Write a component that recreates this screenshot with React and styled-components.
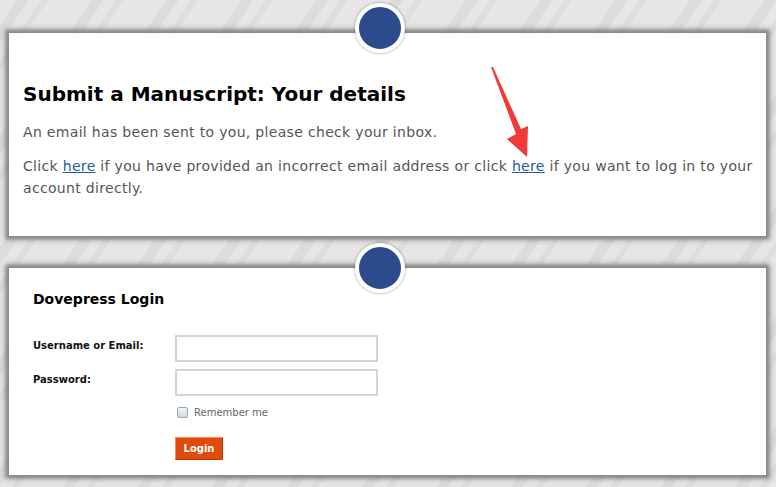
import React, { useState } from 'react';
import styled, { createGlobalStyle } from 'styled-components';

const GlobalStyle = createGlobalStyle`
  html, body {
    margin: 0;
    padding: 0;
  }
  body {
    font-family: "DejaVu Sans", Verdana, sans-serif;
    background-color: #e6e6e6;
    background-image: repeating-linear-gradient(
      124deg,
      #e6e6e6 0px,
      #e6e6e6 14px,
      #dcdcdc 14px,
      #dcdcdc 24px,
      #e6e6e6 24px,
      #e6e6e6 34px,
      #dedede 34px,
      #dedede 40px,
      #e6e6e6 40px,
      #e6e6e6 62px
    );
    min-height: 487px;
    overflow: hidden;
  }
`;

const Page = styled.div`
  display: flex;
  flex-direction: column;
  gap: 32px;
  padding: 33px 10px 12px 9px;
`;

const Card = styled.section`
  position: relative;
  background: #fff;
  height: ${(p) => p.h}px;
  box-sizing: border-box;
  padding: ${(p) => p.pad};
  box-shadow: 0 0 3px 3px #8a8a8a, 0 0 6px 4px rgba(0, 0, 0, 0.25);
`;

const Dot = styled.div`
  position: absolute;
  left: 346px;
  top: ${(p) => p.top}px;
  width: 42px;
  height: 42px;
  border-radius: 50%;
  background: #2c4b8b;
  border: 4px solid #fff;
  box-shadow: 0 0 2px 1px rgba(0, 0, 0, 0.2);
`;

const Title = styled.h1`
  margin: 0 0 14px;
  font-size: 20px;
  font-weight: bold;
  color: #000;
  line-height: 26px;
`;

const Text = styled.p`
  margin: 0 0 12px;
  font-size: 14px;
  letter-spacing: 0.32px;
  line-height: 22px;
  color: #555;
`;

const Link = styled.a`
  color: #1a5ba6;
  text-decoration: underline;
`;

const Arrow = styled.svg`
  position: absolute;
  left: 470px;
  top: 30px;
  overflow: visible;
`;

const LoginTitle = styled.h2`
  margin: 0 0 27px;
  font-size: 14px;
  font-weight: bold;
  color: #000;
  line-height: 18px;
`;

const Form = styled.form`
  display: grid;
  grid-template-columns: 142px 203px;
  row-gap: 7px;
  align-items: start;
`;

const Label = styled.label`
  font-size: 10px;
  font-weight: bold;
  color: #111;
  padding-top: 5px;
`;

const Input = styled.input`
  box-sizing: border-box;
  width: 203px;
  height: 27px;
  border: 2px solid #d4d4d4;
  border-radius: 0;
  padding: 2px 4px;
  font: inherit;
  background: #fff;
  margin: 0;
`;

const Remember = styled.label`
  grid-column: 2;
  display: flex;
  align-items: center;
  gap: 6px;
  font-size: 10px;
  color: #666;
  margin-top: 4px;
  padding-left: 2px;
`;

const Check = styled.span`
  display: inline-block;
  width: 9px;
  height: 9px;
  border: 1px solid #8fa7c4;
  border-radius: 2px;
  background: linear-gradient(#f4f4f4, #d8d8d8);
`;

const LoginButton = styled.button`
  grid-column: 2;
  justify-self: start;
  margin-top: 12px;
  width: 48px;
  height: 23px;
  padding: 0;
  background: #e04a0a;
  color: #fff;
  font-family: inherit;
  font-size: 10px;
  font-weight: bold;
  border: 1px solid #b83a04;
  border-top-color: #f08a5e;
  border-left-color: #f08a5e;
`;

const App = () => {
  const [login, setLogin] = useState({ username: '', password: '' });

  const handleChange = (e) => {
    setLogin({ ...login, [e.target.name]: e.target.value });
  };

  return (
    <>
      <GlobalStyle />
      <Page>
        <Card h={203} pad='48px 8px 0 14px'>
          <Dot top={-30} />
          <Title>Submit a Manuscript: Your details</Title>
          <Text>An email has been sent to you, please check your inbox.</Text>
          <Text>
            Click <Link href='#'>here</Link> if you have provided an incorrect email address or click{' '}
            <Link href='#'>here</Link> if you want to log in to your account directly.
          </Text>
          {/* red annotation arrow */}
          <Arrow width='60' height='100'>
            <polygon
              points='12,4 14,4 42,66 49,63 48,94 28,76 37,71'
              fill='#f23a3a'
            />
          </Arrow>
        </Card>

        <Card h={207} pad='22px 24px 0'>
          <Dot top={-25} />
          <LoginTitle>Dovepress Login</LoginTitle>
          <Form onSubmit={(e) => e.preventDefault()}>
            <Label>Username or Email:</Label>
            <Input name='username' value={login.username} onChange={handleChange} />
            <Label>Password:</Label>
            <Input type='password' name='password' value={login.password} onChange={handleChange} />
            <Remember>
              <Check />
              Remember me
            </Remember>
            <LoginButton type='submit'>Login</LoginButton>
          </Form>
        </Card>
      </Page>
    </>
  );
};

export default App;
